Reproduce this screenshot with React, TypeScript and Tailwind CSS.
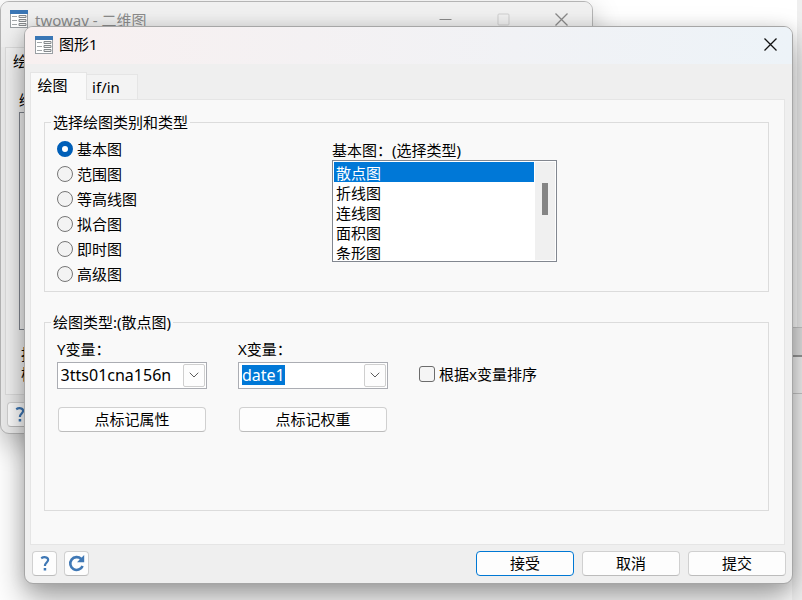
import React, { useEffect, useRef, useState } from "react";
import { ChevronDown } from "lucide-react";
import { clsx } from "clsx";

const CATEGORIES = ["基本图", "范围图", "等高线图", "拟合图", "即时图", "高级图"];
const PLOT_TYPES = ["散点图", "折线图", "连线图", "面积图", "条形图"];

export default function App() {
  const [category, setCategory] = useState("基本图");
  const [plotType, setPlotType] = useState("散点图");
  const [sorted, setSorted] = useState(false);

  return (
    <main className="relative min-h-screen overflow-hidden bg-white font-['Noto_Sans','Noto_Sans_CJK_SC',sans-serif] text-[15px] leading-5 text-black">
      <DesktopEdge />
      <ParentWindow />

      {/* Dialog */}
      <section className="absolute top-[26px] right-[9px] bottom-4 left-6 flex flex-col overflow-hidden rounded-[9px] border border-[#a6a6a6] bg-[#efefef] shadow-[0_16px_32px_rgba(0,0,0,0.34),0_2px_16px_rgba(0,0,0,0.14)]">
        <header className="flex h-[37px] shrink-0 items-center bg-linear-to-r from-[#f8f0f0] to-[#edf3f8] pr-[15px] pb-[2px] pl-[10px]">
          <FormIcon />
          <h1 className="ml-[6px] pb-px">图形1</h1>
          <button type="button" aria-label="关闭" className="ml-auto">
            <CloseIcon />
          </button>
        </header>

        {/* Tabs */}
        <div role="tablist" className="flex shrink-0 items-end pt-2 pl-[5px]">
          <button type="button" role="tab" aria-selected="true" className="relative -mb-px h-7 w-[57px] border border-b-0 border-[#e5e5e5] bg-[#f9f9f9] pr-3 pb-[3px]">
            绘图
          </button>
          <button type="button" role="tab" aria-selected="false" className="h-[25px] w-[51px] border border-b-0 border-l-0 border-[#e5e5e5] bg-[#f3f3f3] pr-3">
            if/in
          </button>
        </div>

        <div role="tabpanel" className="mr-[7px] ml-[5px] flex flex-1 flex-col gap-5 border border-[#e5e5e5] bg-[#f9f9f9] pt-3 pr-[15px] pb-[33px] pl-[13px]">
          <GroupBox title="选择绘图类别和类型">
            <div className="flex h-[158px] pl-3">
              <div className="flex w-[275px] flex-col gap-[5px] pt-[7px]">
                {CATEGORIES.map((name) => (
                  <label key={name} className="flex items-center gap-1">
                    <input
                      type="radio"
                      name="category"
                      checked={category === name}
                      onChange={() => setCategory(name)}
                      className="size-4 appearance-none rounded-full border border-[#767676] bg-[#f3f3f3] checked:border-[5px] checked:border-[#005fb8] checked:bg-white"
                    />
                    {name}
                  </label>
                ))}
              </div>
              <div className="w-[225px] pt-2">
                <label htmlFor="plot-type" className="block">
                  基本图：(选择类型)
                </label>
                <div className="flex border border-[#828790] bg-white p-px">
                  <select
                    id="plot-type"
                    size={5}
                    value={plotType}
                    onChange={(e) => setPlotType(e.target.value)}
                    className="h-[98px] flex-1 appearance-none overflow-hidden border-0 bg-white p-0 outline-none"
                  >
                    {PLOT_TYPES.map((name) => (
                      <option
                        key={name}
                        className="h-5 min-h-5 px-[2px] py-0 leading-[18px] checked:bg-[linear-gradient(#0078d7,#0078d7)] checked:[-webkit-text-fill-color:white]"
                      >
                        {name}
                      </option>
                    ))}
                  </select>
                  <div className="ml-px flex w-5 justify-center bg-[#f0f0f0] pt-[21px]">
                    <div className="h-8 w-[6px] bg-[#858585]" />
                  </div>
                </div>
              </div>
            </div>
          </GroupBox>

          <GroupBox title="绘图类型:(散点图)" grow>
            <div className="flex items-start gap-[31px] pt-[7px] pl-3">
              <div className="flex w-[150px] flex-col">
                <VariableBox id="y-var" label="Y变量：" initial="r3tts01cna156n" />
                <PushButton className="mx-px mt-[18px]">点标记属性</PushButton>
              </div>
              <div className="flex w-[150px] flex-col">
                <VariableBox id="x-var" label="X变量：" initial="date1" selected />
                <PushButton className="mx-px mt-[18px]">点标记权重</PushButton>
              </div>
              <label className="mt-[25px] flex items-center gap-1">
                <input
                  type="checkbox"
                  checked={sorted}
                  onChange={(e) => setSorted(e.target.checked)}
                  className="size-4 appearance-none rounded-[3px] border border-[#6c6c6c] bg-[#f5f5f5] checked:bg-[#005fb8]"
                />
                根据x变量排序
              </label>
            </div>
          </GroupBox>
        </div>

        {/* Footer */}
        <footer className="flex shrink-0 gap-2 px-[6px] pt-[6px] pb-[7px]">
          <div className="ml-px flex gap-[7px]">
            <PushButton label="帮助" className="w-[25px]">
              <HelpIcon />
            </PushButton>
            <PushButton label="重置" className="w-[25px]">
              <ResetIcon />
            </PushButton>
          </div>
          <PushButton primary className="ml-auto w-[98px]">接受</PushButton>
          <PushButton className="w-[98px]">取消</PushButton>
          <PushButton className="w-[98px]">提交</PushButton>
        </footer>
      </section>
    </main>
  );
}

function GroupBox({ title, grow, children }: { title: string; grow?: boolean; children: React.ReactNode }) {
  return (
    <fieldset className={clsx("min-w-0 border border-[#dcdcdc] pb-px", grow && "flex-1")}>
      <legend className="ml-[6px] px-[2px]">{title}</legend>
      {children}
    </fieldset>
  );
}

function VariableBox({ id, label, initial, selected }: { id: string; label: string; initial: string; selected?: boolean }) {
  const [value, setValue] = useState(initial);
  const inputRef = useRef<HTMLInputElement>(null);

  useEffect(() => {
    const el = inputRef.current;
    if (!el) return;
    // long names are scrolled to their end
    el.scrollLeft = el.scrollWidth;
    if (selected) el.select();
  }, [selected]);

  return (
    <>
      <label htmlFor={id}>{label}</label>
      <div className="mt-[3px] flex h-[27px] items-center border border-[#abadb3] bg-white pr-px pb-px pl-[3px]">
        <input
          id={id}
          ref={inputRef}
          value={value}
          onChange={(e) => setValue(e.target.value)}
          className="h-5 w-[110px] bg-transparent text-base leading-5 outline-none selection:bg-[#0078d7] selection:text-white"
        />
        <button
          type="button"
          aria-label="展开"
          className="ml-auto flex h-[23px] w-[22px] items-center justify-center rounded-[2px] border border-[#cfcfcf] bg-[#fdfdfd]"
        >
          <ChevronDown className="size-4 text-[#5c5c5c]" strokeWidth={1.5} />
        </button>
      </div>
    </>
  );
}

function PushButton({ label, primary, className, children }: { label?: string; primary?: boolean; className?: string; children: React.ReactNode }) {
  return (
    <button
      type="button"
      aria-label={label}
      className={clsx(
        "flex h-[25px] items-center justify-center rounded-[4px] border bg-[#fdfdfd] pb-px",
        primary ? "border-[#0078d4]" : "border-[#d0d0d0] border-b-[#bcbcbc]",
        className
      )}
    >
      {children}
    </button>
  );
}

/* Main plot window, inactive behind the dialog */
function ParentWindow() {
  return (
    <section className="absolute top-px left-0 h-[433px] w-[593px] overflow-hidden rounded-[9px] border border-[#b4b4b4] bg-[#ececec] shadow-[0_10px_28px_rgba(0,0,0,0.25)]">
      <header className="flex h-[45px] items-start bg-[#f0f0f0] pt-2 pr-6 pl-[9px] text-[#8c8c8c]">
        <FormIcon />
        <h2 className="ml-[7px]">twoway - 二维图</h2>
        <div className="ml-auto flex items-center gap-[45px] pt-[3px]">
          <svg className="size-[13px]" viewBox="0 0 13 13" stroke="#8a8a8a">
            <path d="M0.5 6.5h12" />
          </svg>
          <svg className="size-[13px]" viewBox="0 0 13 13" fill="none" stroke="#cfcfcf">
            <rect x="1" y="1" width="11" height="11" rx="1" />
          </svg>
          <CloseIcon faded />
        </div>
      </header>
      <div className="ml-1 h-[348px] border border-[#dcdcdc] bg-[#f2f2f2] pt-[3px] pl-[7px]">
        <p>绘</p>
        <p className="mt-[19px] ml-[6px]">绘</p>
        <div className="mt-[2px] ml-[6px] h-[218px] w-[300px] border border-[#828790] bg-[#f4f4f4]" />
        <p className="mt-[14px] ml-2">按</p>
        <p className="ml-2">模</p>
      </div>
      <div className="mt-[7px] ml-[6px]">
        <PushButton label="帮助" className="w-[25px]">
          <HelpIcon />
        </PushButton>
      </div>
    </section>
  );
}

/* Application frame showing past the dialog's right side */
function DesktopEdge() {
  return (
    <div className="absolute inset-y-0 right-0 flex w-[10px] flex-col">
      <div className="ml-[5px] h-[327px] bg-[#efefef]" />
      <div className="h-[30px] border-t border-b-2 border-t-[#c8c8c8] border-b-[#989898] bg-[#e4e4e4]" />
      <div className="h-[37px] border-b border-[#c8c8c8] bg-[#f4f4f4]" />
      <div className="flex-1 bg-[#f4f4f4]" />
    </div>
  );
}

function FormIcon() {
  return (
    <svg className="size-[18px] shrink-0" viewBox="0 0 18 18" fill="none">
      <rect x="0.5" y="0.5" width="17" height="17" fill="#fff" stroke="#9a9fa3" />
      <path d="M0 0h18v4H0z" fill="#3a76b5" />
      <path d="M2 6.5h5M2 10.5h5M2 14.5h5" stroke="#a3a7aa" />
      <path d="M9 5.5h7v2H9zM9 9.5h7v2H9zM9 13.5h7v2H9z" fill="#eee" stroke="#85898c" />
    </svg>
  );
}

function CloseIcon({ faded }: { faded?: boolean }) {
  return (
    <svg className="size-[13px]" viewBox="0 0 13 13" stroke={faded ? "#8a8a8a" : "#111"} strokeWidth="1.3">
      <path d="M0.5 0.5l12 12M12.5 0.5l-12 12" />
    </svg>
  );
}

function HelpIcon() {
  return (
    <svg className="h-[15px] w-[10px]" viewBox="0 0 10 15" fill="none" stroke="#3f78b5" strokeWidth="2.2">
      <path d="M1.2 2.2C4 .4 8.3 1 8.1 4 8 6.5 4.9 6.6 4.9 10" />
      <path d="M3.7 13.3h2.5" strokeWidth="2.4" />
    </svg>
  );
}

function ResetIcon() {
  return (
    <svg className="size-[17px] shrink-0" viewBox="0 0 17 17" fill="none">
      <path d="M13.2 4A6.4 6.4 0 1 0 14.6 11" stroke="#3f78b5" strokeWidth="2.6" />
      <path d="M16.2 0v7.2H9z" fill="#3f78b5" />
    </svg>
  );
}
